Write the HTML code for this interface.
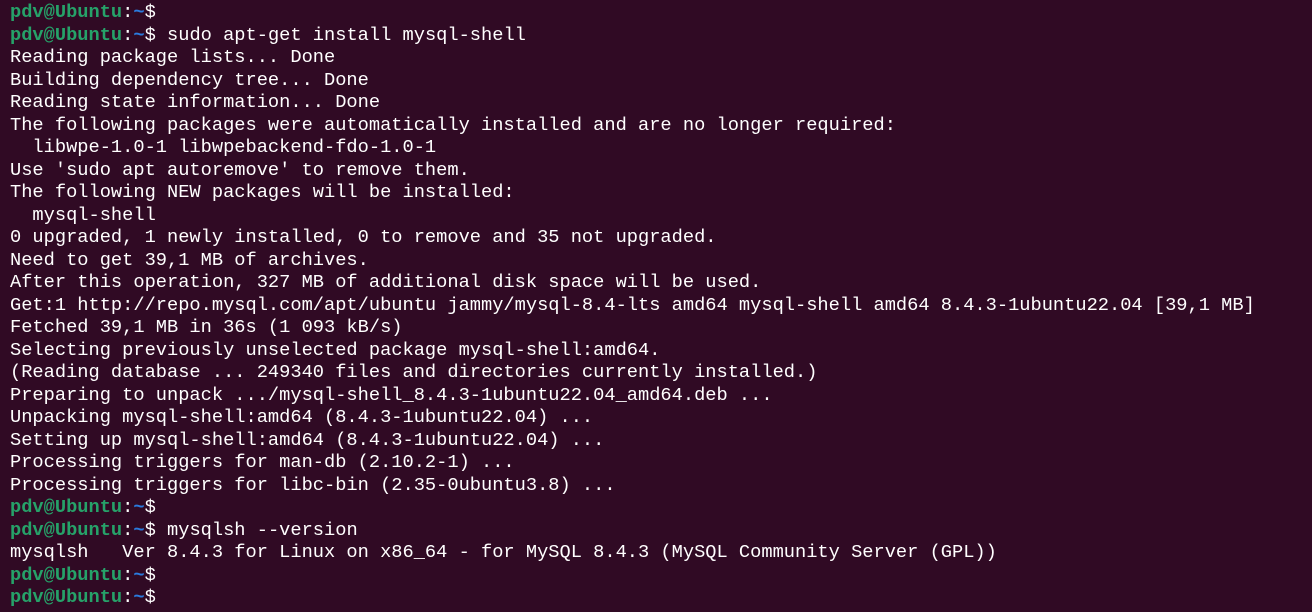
<!DOCTYPE html>
<html><head><meta charset="utf-8"><style>
html,body{margin:0;padding:0;background:#300a24;width:1312px;height:612px;overflow:hidden}
pre{margin:0;padding:1px 0 0 10px;font-family:"Liberation Mono",monospace;font-size:18.7px;line-height:22.5px;color:#ffffff;white-space:pre}
.g{color:#26a269;font-weight:bold}.b{color:#2a7bde;font-weight:bold}
</style></head><body><pre><span class="g">pdv@Ubuntu</span>:<span class="b">~</span>$
<span class="g">pdv@Ubuntu</span>:<span class="b">~</span>$ sudo apt-get install mysql-shell
Reading package lists... Done
Building dependency tree... Done
Reading state information... Done
The following packages were automatically installed and are no longer required:
  libwpe-1.0-1 libwpebackend-fdo-1.0-1
Use 'sudo apt autoremove' to remove them.
The following NEW packages will be installed:
  mysql-shell
0 upgraded, 1 newly installed, 0 to remove and 35 not upgraded.
Need to get 39,1 MB of archives.
After this operation, 327 MB of additional disk space will be used.
Get:1 http://repo.mysql.com/apt/ubuntu jammy/mysql-8.4-lts amd64 mysql-shell amd64 8.4.3-1ubuntu22.04 [39,1 MB]
Fetched 39,1 MB in 36s (1 093 kB/s)
Selecting previously unselected package mysql-shell:amd64.
(Reading database ... 249340 files and directories currently installed.)
Preparing to unpack .../mysql-shell_8.4.3-1ubuntu22.04_amd64.deb ...
Unpacking mysql-shell:amd64 (8.4.3-1ubuntu22.04) ...
Setting up mysql-shell:amd64 (8.4.3-1ubuntu22.04) ...
Processing triggers for man-db (2.10.2-1) ...
Processing triggers for libc-bin (2.35-0ubuntu3.8) ...
<span class="g">pdv@Ubuntu</span>:<span class="b">~</span>$
<span class="g">pdv@Ubuntu</span>:<span class="b">~</span>$ mysqlsh --version
mysqlsh   Ver 8.4.3 for Linux on x86_64 - for MySQL 8.4.3 (MySQL Community Server (GPL))
<span class="g">pdv@Ubuntu</span>:<span class="b">~</span>$
<span class="g">pdv@Ubuntu</span>:<span class="b">~</span>$</pre></body></html>
